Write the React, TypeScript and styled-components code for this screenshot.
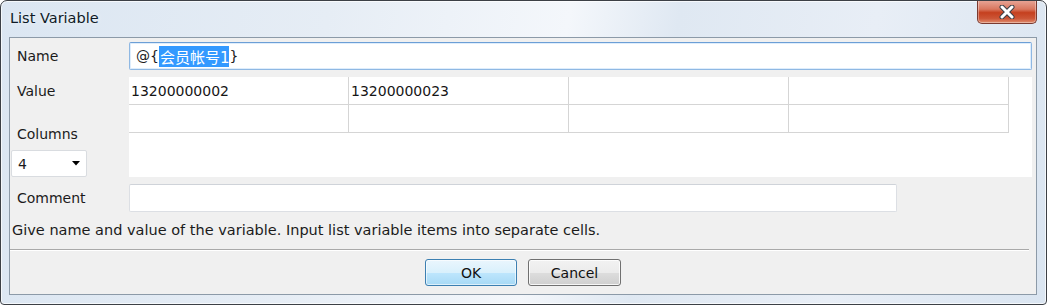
import React, { useState } from "react";
import styled, { createGlobalStyle } from "styled-components";

const GlobalStyle = createGlobalStyle`
  html, body {
    margin: 0;
    padding: 0;
    background: #ffffff;
  }
  body {
    font-family: "DejaVu Sans", "Noto Sans CJK SC", sans-serif;
  }
`;

const UI_FONT = `"DejaVu Sans", "Noto Sans CJK SC", sans-serif`;

const StyledWindow = styled.div`
  box-sizing: border-box;
  width: 1047px;
  height: 305px;
  display: flex;
  flex-direction: column;
  border: 1px solid #3c4046;
  border-radius: 7px 7px 4px 4px;
  background: linear-gradient(
    100deg,
    #dbe6f2 0%,
    #e6edf5 30%,
    #f4f7fb 52%,
    #dfe8f2 62%,
    #e8eef6 80%,
    #dae5f1 100%
  );
  box-shadow: inset 0 0 0 1px rgba(255, 255, 255, 0.7);
  overflow: hidden;
`;

const StyledTitleBar = styled.div`
  height: 36px;
  display: flex;
  align-items: flex-start;
  justify-content: space-between;
  padding-left: 9px;
`;

const StyledTitle = styled.div`
  margin-top: 9px;
  font-family: ${UI_FONT};
  font-size: 14.5px;
  color: #0f1a26;
  text-shadow: 0 0 6px rgba(255, 255, 255, 0.9);
`;

const StyledCloseButton = styled.button`
  width: 60px;
  height: 24px;
  margin: -1px 9px 0 0;
  padding: 0;
  display: flex;
  align-items: center;
  justify-content: center;
  border: 1px solid #7a3a30;
  border-top: none;
  border-radius: 0 0 5px 5px;
  background: linear-gradient(
    180deg,
    #e9a89a 0%,
    #d9775f 40%,
    #c5401f 55%,
    #cc5536 80%,
    #e08d6f 100%
  );
  box-shadow: inset 0 0 0 1px rgba(255, 255, 255, 0.35);
`;

const StyledClient = styled.div`
  flex: 1;
  margin: 0 9px 9px 8px;
  border: 1px solid #8c9aa8;
  background: #f0f0f0;
  display: flex;
  flex-direction: column;
  padding: 4px 4px 0 0;
  font-family: ${UI_FONT};
  font-size: 14px;
  color: #1b1b1b;
`;

const StyledRow = styled.div<{ $mt?: number }>`
  display: flex;
  align-items: flex-start;
  margin-top: ${props => props.$mt || 0}px;
`;

const StyledLabelCol = styled.div`
  width: 119px;
  flex-shrink: 0;
  display: flex;
  flex-direction: column;
`;

const StyledLabel = styled.div<{ $mt?: number }>`
  padding-left: 7px;
  line-height: 28px;
  height: 28px;
  margin-top: ${props => props.$mt || 0}px;
`;

const StyledTextBox = styled.div<{ $focused?: boolean; $width?: string }>`
  box-sizing: border-box;
  height: 28px;
  width: ${props => props.$width || "100%"};
  display: flex;
  align-items: center;
  padding-left: 6px;
  background: #ffffff;
  border: 1px solid ${props => (props.$focused ? "#8fb8e3" : "#dcdfe4")};
  border-top-color: ${props => (props.$focused ? "#6c9fd6" : "#cfd3d9")};
  border-radius: 2px;
  box-shadow: ${props =>
    props.$focused ? "inset 0 0 0 1px rgba(200, 225, 250, 0.6)" : "none"};
  font-family: ${UI_FONT};
  font-size: 14px;
  white-space: pre;
`;

const StyledSelection = styled.span`
  background: #3399ff;
  color: #ffffff;
  font-size: 15px;
  padding-left: 1px;
`;

const StyledTable = styled.div`
  flex: 1;
  height: 100px;
  background: #ffffff;
`;

const StyledGrid = styled.div`
  display: grid;
  grid-template-columns: repeat(4, 220px);
  grid-auto-rows: 28px;
`;

const StyledCell = styled.div`
  box-sizing: border-box;
  border-right: 1px solid #d5d5d5;
  border-bottom: 1px solid #d5d5d5;
  padding-left: 2px;
  line-height: 28px;
  font-size: 14px;
  color: #161616;
`;

const StyledSelect = styled.div`
  box-sizing: border-box;
  margin: 2px 0 0 1px;
  width: 76px;
  height: 27px;
  display: flex;
  align-items: center;
  justify-content: space-between;
  padding: 0 6px 0 6px;
  background: #ffffff;
  border: 1px solid #d9dce0;
  border-radius: 2px;
`;

const StyledHelp = styled.div`
  padding-left: 2px;
  margin-top: 8px;
  line-height: 20px;
  font-size: 14.5px;
`;

const StyledSeparator = styled.div`
  margin: 9px 3px 0 0;
  height: 1px;
  background: #a9a9a9;
  border-bottom: 1px solid #ffffff;
`;

const StyledButtonBar = styled.div`
  display: flex;
  justify-content: center;
  gap: 11px;
  margin-top: 8px;
  padding-left: 4px;
`;

const StyledButton = styled.button<{ $default?: boolean }>`
  box-sizing: border-box;
  width: ${props => (props.$default ? 92 : 93)}px;
  height: 27px;
  padding: 0;
  font-family: ${UI_FONT};
  font-size: 14px;
  color: #111111;
  border-radius: 3px;
  border: 1px solid ${props => (props.$default ? "#3c7fb1" : "#707070")};
  background: ${props =>
    props.$default
      ? "linear-gradient(180deg, #eaf6fd 0%, #d9f0fc 50%, #bee6fd 51%, #a7d9f5 100%)"
      : "linear-gradient(180deg, #f2f2f2 0%, #ebebeb 50%, #dddddd 51%, #cfcfcf 100%)"};
  box-shadow: inset 0 0 0 1px
    ${props => (props.$default ? "rgba(255,255,255,0.6)" : "rgba(255,255,255,0.8)")};
`;

const values = [
  ["13200000002", "13200000023", "", ""],
  ["", "", "", ""]
];

export default function App() {
  const [columns] = useState(4);

  return (
    <>
      <GlobalStyle />
      <StyledWindow>
        <StyledTitleBar>
          <StyledTitle>List Variable</StyledTitle>
          <StyledCloseButton type="button" aria-label="Close">
            <svg width="18" height="14" viewBox="0 0 18 14">
              <path
                d="M4 2 L14 12 M14 2 L4 12"
                stroke="#3a3f47"
                strokeWidth="5"
                strokeLinecap="round"
              />
              <path
                d="M4 2 L14 12 M14 2 L4 12"
                stroke="#ffffff"
                strokeWidth="3"
                strokeLinecap="round"
              />
            </svg>
          </StyledCloseButton>
        </StyledTitleBar>
        <StyledClient>
          <StyledRow>
            <StyledLabelCol>
              <StyledLabel>Name</StyledLabel>
            </StyledLabelCol>
            <StyledTextBox $focused>
              @{"{"}
              <StyledSelection>会员帐号1</StyledSelection>
              {"}"}
            </StyledTextBox>
          </StyledRow>

          <StyledRow $mt={7}>
            <StyledLabelCol>
              <StyledLabel>Value</StyledLabel>
              <StyledLabel $mt={15}>Columns</StyledLabel>
              <StyledSelect>
                <span>{columns}</span>
                <svg width="8" height="5" viewBox="0 0 8 5">
                  <path d="M0 0 H8 L4 4.5 Z" fill="#000000" />
                </svg>
              </StyledSelect>
            </StyledLabelCol>
            <StyledTable>
              <StyledGrid>
                {values.flat().map((v, i) => (
                  <StyledCell key={i}>{v}</StyledCell>
                ))}
              </StyledGrid>
            </StyledTable>
          </StyledRow>

          <StyledRow $mt={7}>
            <StyledLabelCol>
              <StyledLabel>Comment</StyledLabel>
            </StyledLabelCol>
            <StyledTextBox $width="768px" />
          </StyledRow>

          <StyledHelp>
            Give name and value of the variable. Input list variable items into
            separate cells.
          </StyledHelp>

          <StyledSeparator />

          <StyledButtonBar>
            <StyledButton type="button" $default>
              OK
            </StyledButton>
            <StyledButton type="button">Cancel</StyledButton>
          </StyledButtonBar>
        </StyledClient>
      </StyledWindow>
    </>
  );
}
